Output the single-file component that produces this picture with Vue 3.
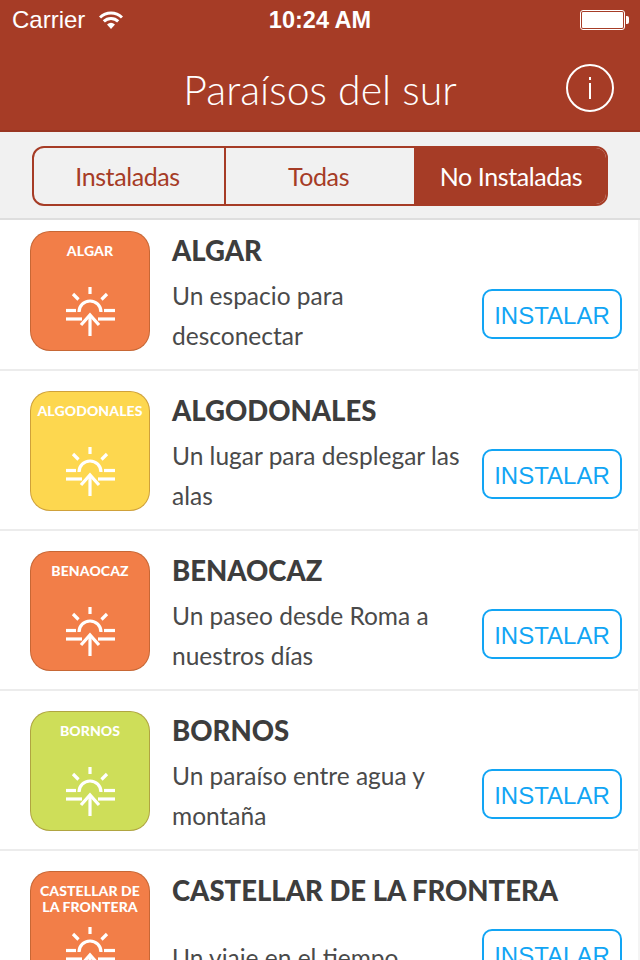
<template>
  <div class="screen">
    <header class="top">
      <div class="status">
        <div class="status-left">
          <span>Carrier</span>
          <svg class="wifi" width="24" height="19" viewBox="0 0 24 19">
            <path d="M1 7.500 A15.500 15.500 0 0 1 23 7.500" fill="none" stroke="#fff" stroke-width="3" />
            <path d="M4.800 11.400 A10.200 10.200 0 0 1 19.200 11.400" fill="none" stroke="#fff" stroke-width="3" />
            <path d="M8 14.600 Q12 11 16 14.600 L12 19 Z" fill="#fff" />
          </svg>
        </div>
        <span class="clock">10:24 AM</span>
        <div class="battery">
          <div class="battery-body"><div class="battery-fill"></div></div>
          <div class="battery-tip"></div>
        </div>
      </div>
      <div class="nav">
        <h1>Paraísos del sur</h1>
        <div class="info"><span class="info-i"></span></div>
      </div>
    </header>

    <div class="filter-bar">
      <div class="segments">
        <div
          v-for="tab in tabs"
          :key="tab"
          class="segment"
          :class="{ active: tab === current }"
        >{{ tab }}</div>
      </div>
    </div>

    <div class="list-clip">
      <ul class="list">
        <li v-for="item in towns" :key="item.name" class="row">
          <div class="badge" :class="item.color">
            <div class="badge-name">{{ item.badge }}</div>
            <svg class="sun" width="50" height="50" viewBox="0 0 50 50">
              <g fill="none" stroke="#fff" stroke-width="3.200">
                <path d="M25 0 V7" />
                <path d="M8 7 L13.500 12.500" />
                <path d="M42 7 L36.500 12.500" />
                <path d="M14 25 A11 11 0 0 1 36 25" />
                <path d="M1 23.500 H11" />
                <path d="M39 23.500 H50" />
                <path d="M1 32 H17" />
                <path d="M33 32 H50" />
                <path d="M25 49 V28" />
                <path d="M16 38 L25 28 L34 38" />
              </g>
            </svg>
          </div>
          <div class="text">
            <div class="name">{{ item.name }}</div>
            <p class="desc" :class="{ low: item.low }">{{ item.desc }}</p>
          </div>
          <button class="install" type="button">INSTALAR</button>
        </li>
      </ul>
    </div>
  </div>
</template>

<script setup>
const tabs = ['Instaladas', 'Todas', 'No Instaladas'];
const current = 'No Instaladas';

const towns = [
  { name: 'ALGAR', badge: 'ALGAR', color: 'orange', desc: 'Un espacio para desconectar' },
  { name: 'ALGODONALES', badge: 'ALGODONALES', color: 'yellow', desc: 'Un lugar para desplegar las alas' },
  { name: 'BENAOCAZ', badge: 'BENAOCAZ', color: 'orange', desc: 'Un paseo desde Roma a nuestros días' },
  { name: 'BORNOS', badge: 'BORNOS', color: 'green', desc: 'Un paraíso entre agua y montaña' },
  { name: 'CASTELLAR DE LA FRONTERA', badge: 'CASTELLAR DE LA FRONTERA', color: 'orange', desc: 'Un viaje en el tiempo', low: true },
];
</script>

<style>
html, body {
  margin: 0;
  background: #fff;
}
</style>

<style scoped>
.screen {
  width: 640px;
  height: 960px;
  overflow: hidden;
  display: flex;
  flex-direction: column;
  font-family: Lato, "Open Sans", sans-serif;
  background: #fff;
}

.top {
  height: 132px;
  box-sizing: border-box;
  background: #a63c26;
  border-bottom: 2px solid #993622;
  color: #fff;
  flex-shrink: 0;
}

.status {
  height: 40px;
  padding: 0 12px;
  display: grid;
  grid-template-columns: 1fr auto 1fr;
  align-items: center;
  font-family: "Liberation Sans", Arial, sans-serif;
  font-size: 24px;
}

.status-left {
  display: flex;
  align-items: center;
  gap: 14px;
}

.wifi {
  margin-top: -2px;
}

.clock {
  font-size: 23.500px;
  font-weight: 700;
}

.battery {
  justify-self: end;
  display: flex;
  align-items: center;
  margin-right: -1px;
}

.battery-body {
  width: 41px;
  height: 16px;
  border: 1px solid #fff;
  border-radius: 3px;
  padding: 1px;
}

.battery-fill {
  width: 100%;
  height: 100%;
  background: #fff;
  border-radius: 1px;
}

.battery-tip {
  width: 3px;
  height: 8px;
  background: #fff;
  margin-left: 1px;
  border-radius: 0 2px 2px 0;
}

.nav {
  height: 90px;
  position: relative;
  display: flex;
  align-items: center;
  justify-content: center;
}

h1 {
  margin: 0;
  padding-top: 9px;
  font-size: 41px;
  font-weight: 300;
  line-height: 1;
}

.info {
  position: absolute;
  right: 26px;
  top: 24px;
  width: 44px;
  height: 44px;
  border: 2px solid #fff;
  border-radius: 50%;
}

.info-i {
  position: absolute;
  left: 21px;
  top: 17px;
  width: 2px;
  height: 16px;
  background: #fff;
}

.info-i::before {
  content: '';
  position: absolute;
  left: 0;
  top: -6px;
  width: 2px;
  height: 3px;
  background: #fff;
}

.filter-bar {
  height: 88px;
  box-sizing: border-box;
  flex-shrink: 0;
  padding: 14px 32px 0;
  background: #f1f1f1;
  border-bottom: 2px solid #dedede;
}

.segments {
  width: 576px;
  height: 60px;
  box-sizing: border-box;
  display: grid;
  grid-template-columns: 192px 190px 1fr;
  border: 2px solid #a63c26;
  border-radius: 12px;
  overflow: hidden;
}

.segment {
  display: flex;
  align-items: center;
  justify-content: center;
  padding-right: 3px;
  color: #a63c26;
  font-size: 25px;
  letter-spacing: -0.400px;
  border-right: 2px solid #a63c26;
}

.segment:last-child {
  border-right: 0;
  padding-right: 0;
}

.segment.active {
  background: #a63c26;
  color: #fff;
}

.list-clip {
  flex: 1;
  overflow: hidden;
  border-right: 2px solid #f4f4f4;
}

.list {
  list-style: none;
  margin: -9px 0 0;
  padding: 0;
}

.row {
  height: 160px;
  box-sizing: border-box;
  padding: 20px 16px 0 30px;
  display: flex;
  border-bottom: 2px solid #ececec;
}

.badge {
  width: 120px;
  height: 120px;
  box-sizing: border-box;
  flex-shrink: 0;
  border-radius: 20px;
  border: 1px solid rgba(120, 60, 20, 0.35);
  color: #fff;
  position: relative;
  text-align: center;
}

.orange { background: #f27e48; }
.yellow { background: #fdd74f; }
.green { background: #cede59; }

.badge-name {
  padding: 11px 4px 0;
  font-size: 14px;
  font-weight: 900;
  line-height: 16px;
  letter-spacing: 0.100px;
}

.sun {
  position: absolute;
  left: 34px;
  top: 55px;
}

.text {
  width: 300px;
  margin-left: 22px;
  flex-shrink: 0;
}

.name {
  font-size: 27.500px;
  font-weight: 900;
  color: #3d3d3d;
  line-height: 40px;
  white-space: nowrap;
}

.desc {
  margin: 5px 0 0;
  font-size: 24.500px;
  line-height: 40px;
  color: #4a4a4a;
}

.desc.low {
  margin-top: 27px;
}

.install {
  width: 140px;
  height: 50px;
  margin: 58px 0 0 10px;
  flex-shrink: 0;
  padding: 3px 0 0;
  background: #fff;
  border: 2px solid #12a5f4;
  border-radius: 10px;
  color: #12a5f4;
  font-family: "Liberation Sans", Arial, sans-serif;
  font-size: 24px;
}
</style>
